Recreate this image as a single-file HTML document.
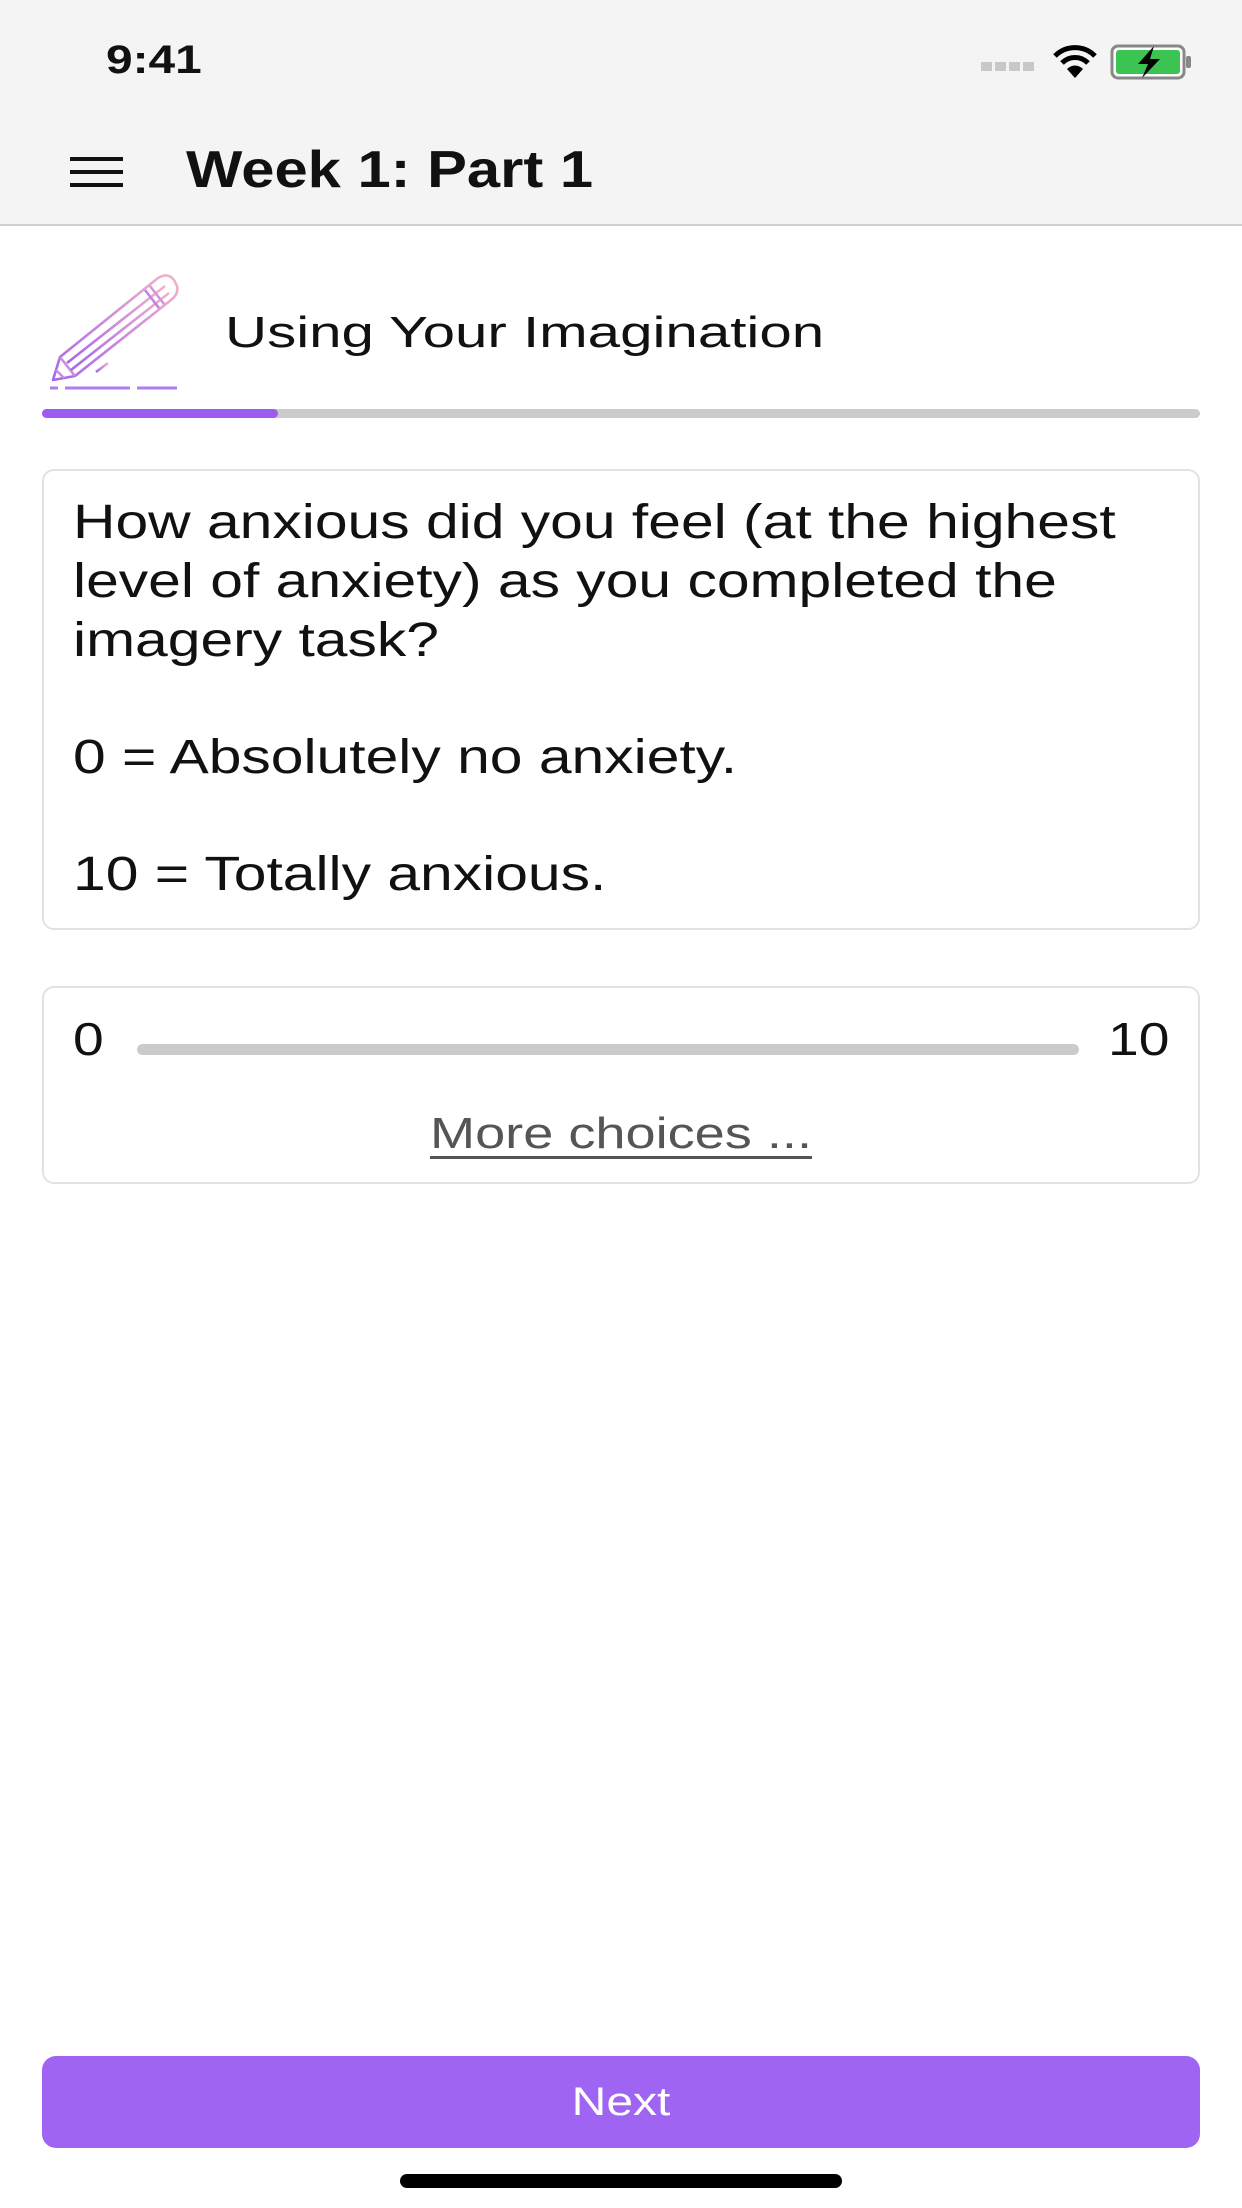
<!DOCTYPE html>
<html><head><meta charset="utf-8"><style>
*{margin:0;padding:0;box-sizing:border-box}
body{width:1242px;height:2208px;background:#fff;position:relative;font-family:"Liberation Sans",sans-serif;overflow:hidden;color:#111}
.top{position:absolute;left:0;top:0;width:1242px;height:226px;background:#f4f4f4;border-bottom:2px solid #cfcfcf}
.abs{position:absolute;white-space:nowrap;transform-origin:0 0}
.card{position:absolute;left:42px;width:1158px;border:2px solid #e2e2e2;border-radius:12px;background:#fff}
.q{font-size:48px;line-height:59px;transform:scaleX(1.225)}
</style></head><body>
<div class="top">
 <div class="abs" style="left:106px;top:38px;font-size:40px;font-weight:bold;transform:scaleX(1.196)">9:41</div>
 <div class="abs" style="left:981px;top:62px;width:54px;height:9px;background:repeating-linear-gradient(90deg,#c8c8c8 0 11px,transparent 11px 14px)"></div>
 <svg class="abs" style="left:1052px;top:44px" width="46" height="36" viewBox="0 0 46 36"><path d="M3 12 A28 28 0 0 1 43 12" stroke="#000" stroke-width="5" fill="none"/><path d="M10 19 A18 18 0 0 1 36 19" stroke="#000" stroke-width="5" fill="none"/><path d="M23 34 L15 25 A11 11 0 0 1 31 25 Z" fill="#000"/></svg>
 <svg class="abs" style="left:1110px;top:44px" width="84" height="36" viewBox="0 0 84 36"><rect x="2" y="2" width="72" height="32" rx="6" fill="#fff" stroke="#888" stroke-width="3"/><rect x="6" y="6" width="64" height="24" rx="3" fill="#3bc452"/><rect x="76" y="12" width="5" height="12" rx="2" fill="#888"/><path d="M44 2 L28 20 L38 20 L32 34 L50 15 L40 15 Z" fill="#000"/></svg>
 <div class="abs" style="left:70px;top:157px;width:53px;height:4px;background:#111;box-shadow:0 13px 0 #111,0 26px 0 #111"></div>
 <div class="abs" style="left:186px;top:140px;font-size:52px;font-weight:bold;transform:scaleX(1.148)">Week 1: Part 1</div>
</div>
<svg class="abs" style="left:30px;top:260px" width="160" height="150" viewBox="0 0 160 150">
 <defs><linearGradient id="g" x1="0" y1="1" x2="1" y2="0"><stop offset="0" stop-color="#a466f0"/><stop offset="1" stop-color="#f4b3c8"/></linearGradient></defs>
 <g fill="none" stroke="url(#g)" stroke-width="2.6" stroke-linejoin="round">
  <path d="M23 120 L30 97 L128 18 Q138 12 144 20 L147 26 Q149 34 141 40 L45 116 Z"/>
  <path d="M30 97 L45 116"/>
  <path d="M26 110 L34 118"/>
  <path d="M37 103 L135 26"/>
  <path d="M41 110 L139 33"/>
  <path d="M115 30 L129 48 M120 26 L134 44"/>
  <path d="M66 112 L78 103"/>
 </g>
 <g stroke="#b27cf0" stroke-width="3"><path d="M20 128 H28 M35 128 H100 M107 128 H147"/></g>
</svg>
<div class="abs" style="left:225px;top:308px;font-size:44px;transform:scaleX(1.324)">Using Your Imagination</div>
<div class="abs" style="left:42px;top:409px;width:1158px;height:9px;border-radius:5px;background:#cbcbcb"><div style="width:236px;height:9px;border-radius:5px;background:#9b5cf0"></div></div>
<div class="card" style="top:469px;height:461px"></div>
<div class="abs q" style="left:73px;top:493px">How anxious did you feel (at the highest<br>level of anxiety) as you completed the<br>imagery task?</div>
<div class="abs q" style="left:73px;top:728px">0 = Absolutely no anxiety.</div>
<div class="abs q" style="left:73px;top:845px">10 = Totally anxious.</div>
<div class="card" style="top:986px;height:198px"></div>
<div class="abs" style="left:73px;top:1011px;font-size:46px;line-height:56px;transform:scaleX(1.2)">0</div>
<div class="abs" style="left:137px;top:1044px;width:942px;height:11px;border-radius:6px;background:#cbcbcb"></div>
<div class="abs" style="left:1108px;top:1011px;font-size:46px;line-height:56px;transform:scaleX(1.2)">10</div>
<div class="abs" style="left:0;width:1242px;top:1106px;text-align:center;font-size:44px;line-height:56px;color:#555;transform-origin:621px 0;transform:scaleX(1.23);text-decoration:underline;text-decoration-thickness:3px;text-underline-offset:8px">More choices ...</div>
<div class="abs" style="left:42px;top:2056px;width:1158px;height:92px;border-radius:14px;background:#a064f3"></div>
<div class="abs" style="left:0;width:1242px;top:2056px;color:#fff;font-size:40px;text-align:center;line-height:92px;transform-origin:621px 0;transform:scaleX(1.2)">Next</div>
<div class="abs" style="left:400px;top:2174px;width:442px;height:14px;border-radius:7px;background:#000"></div>
</body></html>
